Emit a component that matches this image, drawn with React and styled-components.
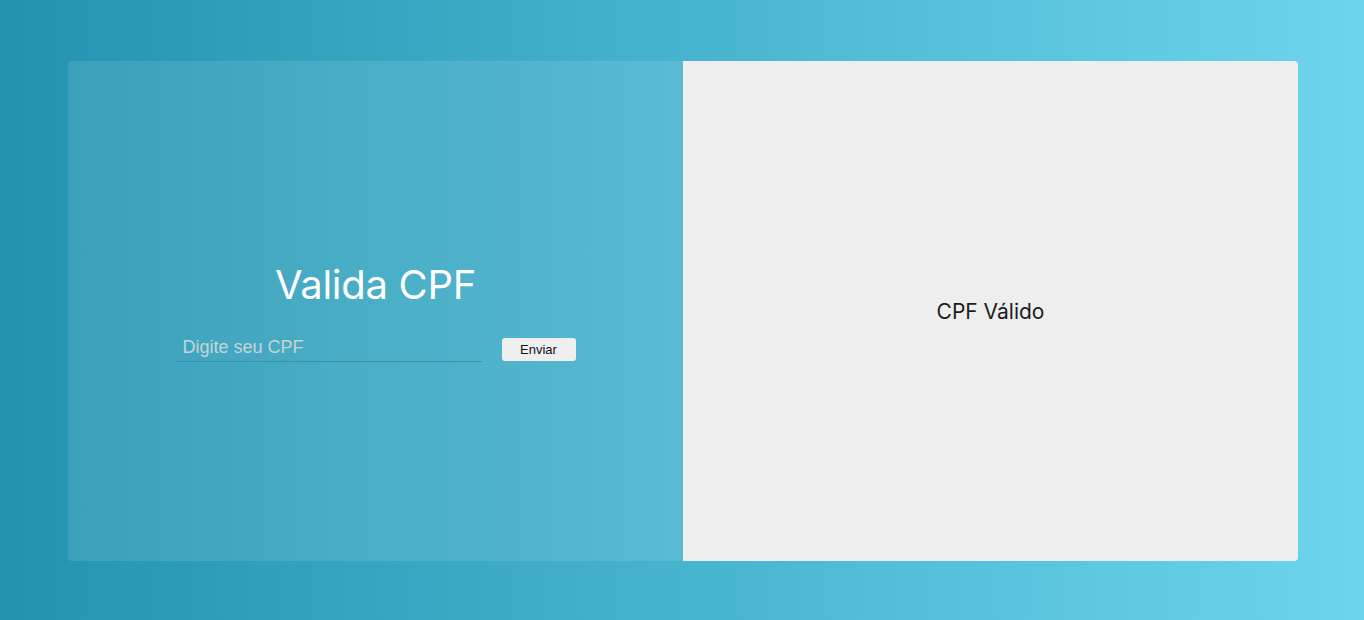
import React from "react";
import styled, { createGlobalStyle } from "styled-components";

const Global = createGlobalStyle`
  html, body { margin: 0; padding: 0; }
  body { font-family: "Inter", "Liberation Sans", sans-serif; }
`;

const Page = styled.div`
  width: 1364px;
  height: 620px;
  box-sizing: border-box;
  padding: 61px 0 0 68px;
  background: linear-gradient(to right, #2193b0, #6dd5ed);
  display: flex;
  align-items: flex-start;
`;

const Card = styled.div`
  width: 1230px;
  height: 500px;
  display: flex;
  border-radius: 4px;
  overflow: hidden;
`;

const Panel = styled.div`
  flex: 1;
  display: flex;
  flex-direction: column;
  align-items: center;
  justify-content: center;
  background: ${(p) => (p.$light ? "#eeeeee" : "rgba(255,255,255,0.1)")};
`;

const Title = styled.h1`
  margin: 0 0 28px;
  font-family: "Inter", sans-serif;
  font-weight: 400;
  font-size: 40px;
  letter-spacing: -0.3px;
  color: #ffffff;
`;

const Form = styled.form`
  display: flex;
  align-items: flex-end;
  gap: 20px;
`;

const Input = styled.input`
  width: 306px;
  box-sizing: border-box;
  border: none;
  border-bottom: 1px solid #3f8fa6;
  background: transparent;
  font-family: "Liberation Sans", Arial, sans-serif;
  font-size: 18px;
  padding: 0 7px 3px;
  color: #fff;
  outline: none;
  &::placeholder { color: #c9d3d6; font-family: "Liberation Sans", Arial, sans-serif; }
`;

const Button = styled.button`
  width: 74px;
  height: 23px;
  border: none;
  border-radius: 3px;
  background: #efefef;
  font-family: "Liberation Sans", Arial, sans-serif;
  font-size: 13px;
  color: #111;
  padding: 0;
  margin-bottom: 1px;
`;

const Result = styled.p`
  margin: 0;
  font-family: "Inter", sans-serif;
  font-size: 21px;
  color: #1c1c1c;
`;

export default function App() {
  return (
    <>
      <Global />
      <Page>
        <Card>
          <Panel>
            <Title>Valida CPF</Title>
            <Form onSubmit={(e) => e.preventDefault()}>
              <Input placeholder="Digite seu CPF" />
              <Button type="submit">Enviar</Button>
            </Form>
          </Panel>
          <Panel $light>
            <Result>CPF Válido</Result>
          </Panel>
        </Card>
      </Page>
    </>
  );
}
